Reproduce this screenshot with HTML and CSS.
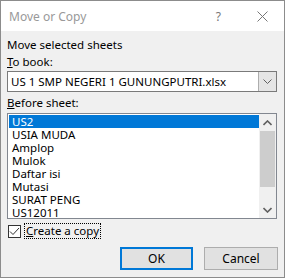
FILE: index.html
```html
<!DOCTYPE html>
<html lang="en">
<head>
    <meta charset="UTF-8">
    <title>Move or Copy</title>
    <link rel="stylesheet" href="styles.css">
</head>
<body>
    <div class="sheet">
        <div class="dialog">
            <div class="titlebar">
                <span class="title">Move or Copy</span>
                <span class="help">?</span>
                <svg class="close" width="11" height="11" viewBox="0 0 11 11">
                    <path d="M0.5 0.5 L10.5 10.5 M10.5 0.5 L0.5 10.5" stroke="#777" stroke-width="1" fill="none"/>
                </svg>
            </div>
            <div class="content">
                <div class="label">Move selected sheets</div>
                <div class="label"><u>T</u>o book:</div>
                <div class="combo">
                    <div class="combo-text">US 1 SMP NEGERI 1 GUNUNGPUTRI.xlsx</div>
                    <div class="combo-btn">
                        <svg width="9" height="5" viewBox="0 0 9 5">
                            <path d="M0.5 0.5 L4.5 4.5 L8.5 0.5" stroke="#606060" stroke-width="1" fill="none"/>
                        </svg>
                    </div>
                </div>
                <div class="label label-before"><u>B</u>efore sheet:</div>
                <div class="listbox">
                    <ul class="items">
                        <li class="selected">US2</li>
                        <li>USIA MUDA</li>
                        <li>Amplop</li>
                        <li>Mulok</li>
                        <li>Daftar isi</li>
                        <li>Mutasi</li>
                        <li>SURAT PENG</li>
                        <li>US12011</li>
                    </ul>
                    <div class="scrollbar">
                        <div class="arrow">
                            <svg width="9" height="6" viewBox="0 0 9 6">
                                <path d="M0.5 5 L4.5 1 L8.5 5" stroke="#606060" stroke-width="1.6" fill="none"/>
                            </svg>
                        </div>
                        <div class="track">
                            <div class="thumb"></div>
                        </div>
                        <div class="arrow">
                            <svg width="9" height="6" viewBox="0 0 9 6">
                                <path d="M0.5 1 L4.5 5 L8.5 1" stroke="#606060" stroke-width="1.6" fill="none"/>
                            </svg>
                        </div>
                    </div>
                </div>
                <div class="check-row">
                    <div class="checkbox">
                        <svg width="11" height="11" viewBox="0 0 11 11">
                            <path d="M1 5.5 L4 8.5 L10 2" stroke="#333" stroke-width="1" fill="none"/>
                        </svg>
                    </div>
                    <span class="check-label"><u>C</u>reate a copy</span>
                </div>
                <div class="buttons">
                    <button class="btn btn-default">OK</button>
                    <button class="btn">Cancel</button>
                </div>
            </div>
        </div>
    </div>
</body>
</html>
```

FILE: styles.css
```css
body {
    margin: 0;
    background-color: #ffffff;
    font-family: 'Noto Sans', sans-serif;
    font-size: 11.5px;
    color: #000;
}
.sheet {
    width: 286px;
    height: 280px;
    overflow: hidden;
}
.dialog {
    width: 283px;
    height: 276px;
    border: 1px solid #8c8c8c;
    background-color: #f0f0f0;
    display: flex;
    flex-direction: column;
}
.titlebar {
    height: 30px;
    background-color: #fff;
    display: flex;
    align-items: center;
    padding-left: 8px;
    color: #999;
    font-size: 12px;
}
.title {
    flex: 1;
}
.help {
    margin-right: 36px;
    color: #777;
}
.close {
    margin-right: 16px;
}
.content {
    padding: 5px 6px 0 6px;
    display: flex;
    flex-direction: column;
}
.label {
    height: 17px;
    line-height: 17px;
}
.label-before {
    margin-top: 2px;
    margin-bottom: 2px;
}
.combo {
    width: 270px;
    height: 21px;
    margin-top: 1px;
    border: 1px solid #7a7a7a;
    background-color: #fff;
    display: flex;
    box-sizing: border-box;
}
.combo-text {
    flex: 1;
    padding-left: 3px;
    line-height: 19px;
}
.combo-btn {
    width: 17px;
    background-color: #e5e5e5;
    border-left: 1px solid #adadad;
    display: flex;
    justify-content: center;
    align-items: center;
}
.listbox {
    width: 270px;
    height: 106px;
    box-sizing: border-box;
    border: 1px solid #828790;
    background-color: #fff;
    display: flex;
}
.items {
    list-style: none;
    margin: 0;
    padding: 1px 0 0 1px;
    flex: 1;
}
.items li {
    height: 13px;
    line-height: 13px;
    padding-left: 3px;
}
.items li.selected {
    background-color: #0078d7;
    color: #fff;
}
.scrollbar {
    width: 17px;
    background-color: #f0f0f0;
    display: flex;
    flex-direction: column;
}
.arrow {
    height: 17px;
    display: flex;
    justify-content: center;
    align-items: center;
}
.track {
    flex: 1;
    padding: 0 1px;
}
.thumb {
    height: 56px;
    background-color: #cdcdcd;
}
.check-row {
    display: flex;
    align-items: center;
    margin-top: 4px;
    height: 16px;
}
.checkbox {
    width: 13px;
    height: 13px;
    box-sizing: border-box;
    border: 1px solid #333;
    background-color: #fff;
    display: flex;
    justify-content: center;
    align-items: center;
    margin-left: 1px;
}
.check-label {
    margin-left: 3px;
    padding: 0 1px;
    border: 1px dotted #000;
    line-height: 14px;
}
.buttons {
    display: flex;
    justify-content: flex-end;
    gap: 11px;
    margin-top: 8px;
    width: 271px;
}
.btn {
    font-family: inherit;
    font-size: 12px;
    height: 23px;
    width: 74px;
    background-color: #e1e1e1;
    border: 1px solid #adadad;
    color: #000;
    padding: 0;
}
.btn-default {
    border: 2px solid #0078d7;
    width: 73px;
}
```
